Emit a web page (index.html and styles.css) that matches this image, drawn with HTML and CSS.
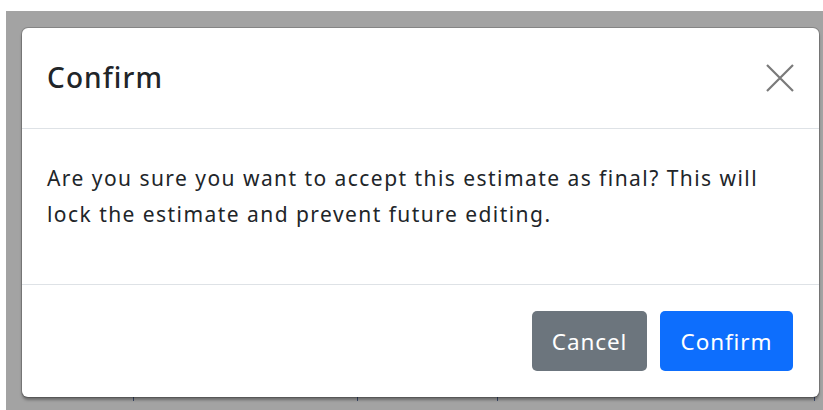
FILE: index.html
```html
<!DOCTYPE html>
<html lang="en">
<head>
<meta charset="utf-8">
<title>Confirm</title>
<link rel="stylesheet" href="styles.css">
</head>
<body>
  <div class="backdrop">
    <div class="sheet-lines">
      <span class="tick t1"></span>
      <span class="tick t2"></span>
      <span class="tick t3"></span>
      <span class="tick t4"></span>
    </div>
    <div class="modal" role="dialog" aria-labelledby="modal-title">
      <header class="modal-header">
        <h5 class="modal-title" id="modal-title">Confirm</h5>
        <button class="btn-close" type="button" aria-label="Close">
          <svg viewBox="0 0 28 28" width="28" height="28" aria-hidden="true">
            <path d="M1 1 L27 27 M27 1 L1 27" stroke="currentColor" stroke-width="2.2" fill="none"/>
          </svg>
        </button>
      </header>
      <div class="modal-body">
        <p>Are you sure you want to accept this estimate as final? This will lock the estimate and prevent future editing.</p>
      </div>
      <footer class="modal-footer">
        <button class="btn btn-secondary" type="button">Cancel</button>
        <button class="btn btn-primary" type="button">Confirm</button>
      </footer>
    </div>
  </div>
</body>
</html>
```

FILE: styles.css
```css
html, body {
  margin: 0;
  padding: 0;
  height: 100%;
  background: #ffffff;
  overflow: hidden;
}

body {
  font-family: "Noto Sans", "Open Sans", sans-serif;
  color: #212529;
}

.backdrop {
  position: relative;
  margin: 11px 0 0 6px;
  height: calc(100% - 11px);
  background: #a3a3a3;
  padding: 17px 4px 0 16px;
  box-sizing: border-box;
}

/* table column rules of the page underneath, peeking out below the dialog */
.sheet-lines {
  position: absolute;
  left: 0;
  right: 0;
  top: 386px;
  height: 4px;
}

.tick {
  position: absolute;
  top: 0;
  width: 1px;
  height: 4px;
  background: #3d4c6e;
}
.t1 { left: 127px; }
.t2 { left: 351px; }
.t3 { left: 491px; }
.t4 { left: 808px; }

.modal {
  position: relative;
  width: 797px;
  height: 369px;
  background: #ffffff;
  border-radius: 6px;
  box-shadow: 0 0 0 1px rgba(0, 0, 0, 0.18), 0 3px 3px rgba(0, 0, 0, 0.35);
  display: flex;
  flex-direction: column;
  box-sizing: border-box;
}

.modal-header {
  height: 101px;
  box-sizing: border-box;
  padding: 0 25px;
  display: flex;
  align-items: center;
  justify-content: space-between;
  border-bottom: 1px solid #dee2e6;
}

.modal-title {
  margin: 0;
  font-size: 28px;
  font-weight: 500;
  letter-spacing: 1.1px;
  line-height: 1.2;
  color: #212529;
}

.btn-close {
  width: 28px;
  height: 28px;
  padding: 0;
  border: 0;
  background: transparent;
  color: #7a7a7a;
  display: flex;
}

.modal-body {
  height: 156px;
  box-sizing: border-box;
  padding: 31px 25px 0;
  border-bottom: 1px solid #dee2e6;
}

.modal-body p {
  margin: 0;
  font-size: 21px;
  letter-spacing: 1.45px;
  line-height: 36px;
  color: #212529;
}

.modal-footer {
  flex: 1;
  display: flex;
  justify-content: flex-end;
  align-items: flex-start;
  gap: 13px;
  padding: 26px 26px 0;
}

.btn {
  height: 60px;
  border: 0;
  border-radius: 5px;
  font-family: inherit;
  font-size: 22.5px;
  letter-spacing: 0.9px;
  color: #ffffff;
  padding: 0;
}

.btn-secondary {
  width: 115px;
  background: #6c757d;
}

.btn-primary {
  width: 133px;
  background: #0d6efd;
}
```
